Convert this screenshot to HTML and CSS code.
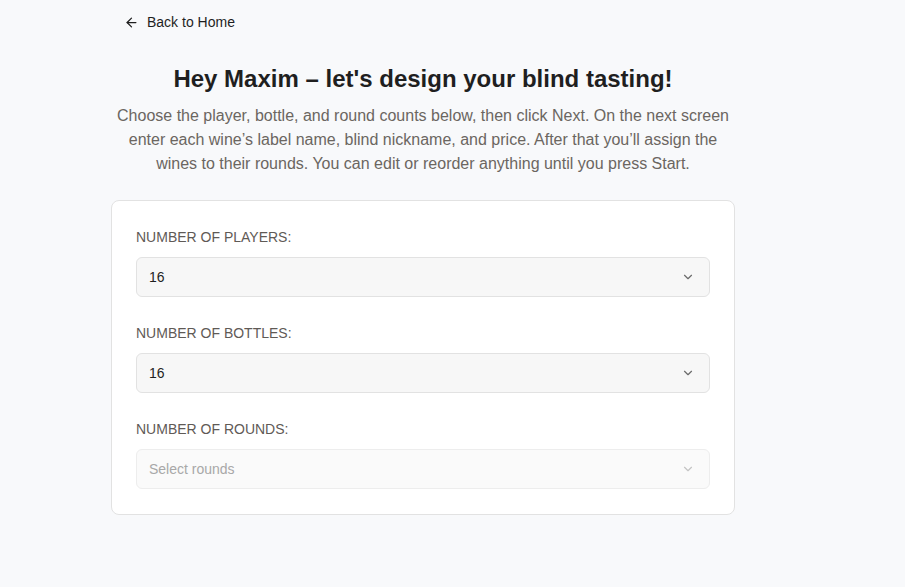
FILE: index.html
```html
<!DOCTYPE html>
<html lang="en">
<head>
<meta charset="utf-8">
<title>Design your blind tasting</title>
<link rel="stylesheet" href="styles.css">
</head>
<body>
<div class="page">
  <a class="back" href="#">
    <svg class="back-icon" width="16" height="16" viewBox="0 0 24 24" fill="none" stroke="currentColor" stroke-width="2" stroke-linecap="round" stroke-linejoin="round"><path d="M19 12H5"/><path d="M12 19l-7-7 7-7"/></svg>
    <span>Back to Home</span>
  </a>
  <h1 class="title">Hey Maxim – let's design your blind tasting!</h1>
  <p class="intro">Choose the player, bottle, and round counts below, then click Next. On the next screen enter each wine’s label name, blind nickname, and price. After that you’ll assign the wines to their rounds. You can edit or reorder anything until you press Start.</p>
  <div class="card">
    <div class="field">
      <div class="label">NUMBER OF PLAYERS:</div>
      <div class="select"><span>16</span>
        <svg class="chev" width="16" height="16" viewBox="0 0 24 24" fill="none" stroke="currentColor" stroke-width="2" stroke-linecap="round" stroke-linejoin="round"><path d="M6 9l6 6 6-6"/></svg>
      </div>
    </div>
    <div class="field">
      <div class="label">NUMBER OF BOTTLES:</div>
      <div class="select"><span>16</span>
        <svg class="chev" width="16" height="16" viewBox="0 0 24 24" fill="none" stroke="currentColor" stroke-width="2" stroke-linecap="round" stroke-linejoin="round"><path d="M6 9l6 6 6-6"/></svg>
      </div>
    </div>
    <div class="field">
      <div class="label">NUMBER OF ROUNDS:</div>
      <div class="select disabled"><span>Select rounds</span>
        <svg class="chev" width="16" height="16" viewBox="0 0 24 24" fill="none" stroke="currentColor" stroke-width="2" stroke-linecap="round" stroke-linejoin="round"><path d="M6 9l6 6 6-6"/></svg>
      </div>
    </div>
  </div>
</div>
</body>
</html>
```
FILE: styles.css
```css
* { box-sizing: border-box; }
html, body { margin: 0; padding: 0; }
body {
  background: #f8f9fb;
  font-family: "Liberation Sans", Arial, sans-serif;
  color: #1f1f1f;
}
.page {
  width: 624px;
  margin: 0 auto 0 111px;
  padding-top: 12px;
}
.back {
  display: inline-flex;
  align-items: center;
  gap: 8px;
  margin-left: 13px;
  color: #1f1f1f;
  text-decoration: none;
  font-size: 14px;
  line-height: 20px;
}
.back-icon { width: 15px; height: 15px; }
.title {
  margin: 29px 0 0;
  text-align: center;
  font-size: 24px;
  line-height: 32px;
  font-weight: 700;
  color: #1f1f1f;
}
.intro {
  margin: 9px 0 0;
  text-align: center;
  font-size: 16px;
  line-height: 24px;
  color: #6b6661;
}
.card {
  margin-top: 24px;
  background: #ffffff;
  border: 1px solid #e2e2e2;
  border-radius: 8px;
  padding: 26px 24px 25px;
  display: flex;
  flex-direction: column;
  gap: 26px;
}
.label {
  font-size: 14px;
  line-height: 20px;
  color: #5f5a56;
  margin-bottom: 10px;
}
.select {
  height: 40px;
  border: 1px solid #e2e2e2;
  border-radius: 6px;
  background: #f7f7f7;
  display: flex;
  align-items: center;
  justify-content: space-between;
  padding: 0 14px 0 12px;
  font-size: 14px;
  color: #1f1f1f;
}
.chev { width: 14px; height: 14px; color: #6b6b6b; }
.select.disabled {
  background: #fafafa;
  border-color: #ededed;
  color: #a8a8a8;
}
.select.disabled .chev { color: #c4c4c4; }
```
